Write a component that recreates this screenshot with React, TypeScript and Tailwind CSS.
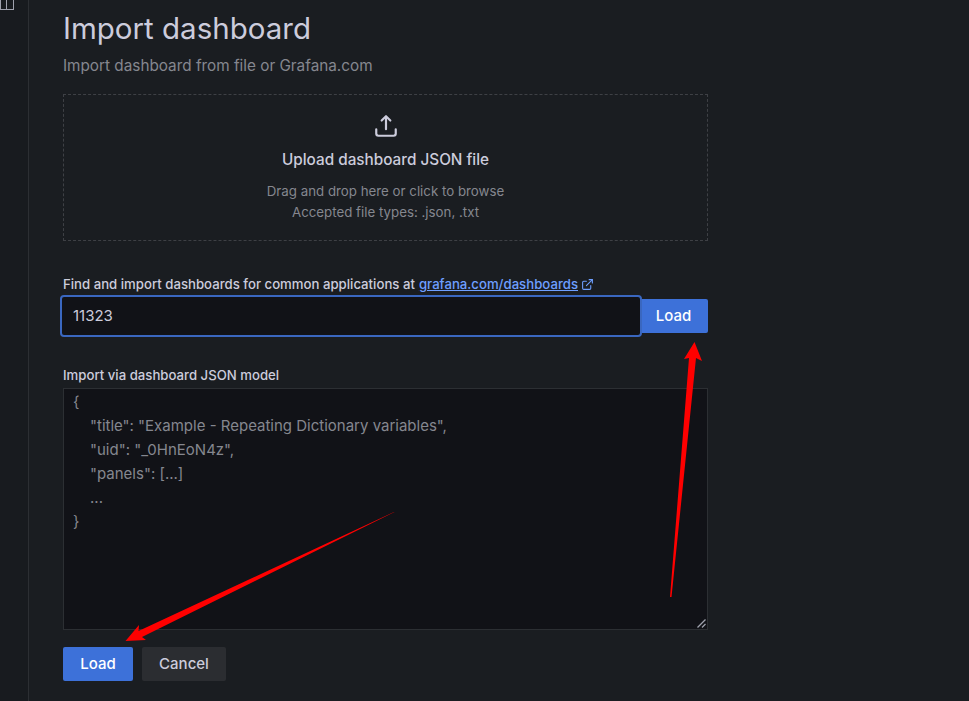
const font = "font-['Inter','Noto_Sans',sans-serif]";

function UploadIcon() {
  return (
    <svg width="26" height="26" viewBox="0 0 24 24" fill="#ccccdc">
      <path d="M8.71 7.71 11 5.41V15a1 1 0 0 0 2 0V5.41l2.29 2.3a1 1 0 0 0 1.42 0 1 1 0 0 0 0-1.42l-4-4a1 1 0 0 0-1.42 0l-4 4a1 1 0 1 0 1.42 1.42Z" />
      <path d="M21 14a1 1 0 0 0-1 1v4a1 1 0 0 1-1 1H5a1 1 0 0 1-1-1v-4a1 1 0 0 0-2 0v4a3 3 0 0 0 3 3h14a3 3 0 0 0 3-3v-4a1 1 0 0 0-1-1Z" />
    </svg>
  );
}

function ExternalIcon() {
  return (
    <svg width="13" height="13" viewBox="0 0 24 24" fill="none" stroke="#6e9fff" strokeWidth="2" strokeLinecap="round" strokeLinejoin="round">
      <path d="M18 14v5a2 2 0 0 1-2 2H5a2 2 0 0 1-2-2V8a2 2 0 0 1 2-2h5" />
      <path d="M15 3h6v6" />
      <path d="M10 14 21 3" />
    </svg>
  );
}

function Arrows() {
  return (
    <svg className="absolute left-0 top-0 pointer-events-none" width="969" height="701" viewBox="0 0 969 701">
      <polygon fill="#ff0000" points="670,597 689,358 684,359 694.5,342 702,361 696,358 671.5,597" />
      <polygon fill="#ff0000" points="394.5,512 142,637 146,640 125.5,641 139,625 138.5,631 394,512" />
    </svg>
  );
}

export default function App() {
  return (
    <div className={`relative flex h-[701px] w-[969px] overflow-hidden bg-[#1a1d21] ${font}`}>
      <div className="relative h-full w-[29px] shrink-0 border-r border-[#2c2f33] bg-[#181b1f]">
        <div className="absolute left-0 top-[-5px] flex h-[15px] w-[14px] border-[1.5px] border-[#9fa1ad]">
          <div className="w-[6px] border-r-[1.5px] border-[#9fa1ad]" />
        </div>
      </div>

      <main className="w-[679px] shrink-0 pl-[34px]">
        <h1 className="mt-[9px] h-[38px] text-[29.5px] leading-[38px] text-[#ccccdc]">Import dashboard</h1>
        <p className="mt-[9px] h-[20px] text-[15.3px] leading-[20px] text-[#85878f]">Import dashboard from file or Grafana.com</p>

        <div className="mt-[18px] flex h-[147px] flex-col items-center border border-dashed border-[#3e4045] text-center">
          <div className="mt-[18px] h-[26px]">
            <UploadIcon />
          </div>
          <div className="mt-[11px] text-[15.3px] font-medium leading-[20px] text-[#ccccdc]">Upload dashboard JSON file</div>
          <div className="mt-[11px] text-[13.3px] leading-[21px] text-[#85878f]">
            Drag and drop here or click to browse
            <br />
            Accepted file types: .json, .txt
          </div>
        </div>

        <div className="mt-[34px] flex h-[18px] items-center text-[13.2px] font-medium leading-[18px] text-[#ccccdc]">
          Find and import dashboards for common applications at
          <a className="ml-[4px] text-[#6e9fff] underline">grafana.com/dashboards</a>
          <span className="ml-[3px] flex">
            <ExternalIcon />
          </span>
        </div>

        <div className="mt-[2px] flex h-[42px] items-center">
          <div className="ml-[-3px] flex h-[42px] w-[582px] items-center rounded-[4px] border-2 border-[#3a67c0] bg-[#111217] pl-[11px] text-[15px] text-[#ccccdc]">
            11323
          </div>
          <button className="h-[34px] w-[66px] rounded-r-[2px] bg-[#3d71d9] pr-[3px] text-[15px] font-medium text-white">Load</button>
        </div>

        <div className="mt-[29px] h-[18px] text-[13.2px] font-medium leading-[18px] text-[#ccccdc]">Import via dashboard JSON model</div>

        <div className="relative mt-[4px] h-[242px] border border-[#2c2f33] bg-[#111217] pl-[9px] pt-[1px] text-[15px] leading-[24px] text-[#85878f]">
          <div>{"{"}</div>
          <div className="pl-[17px]">"title": "Example - Repeating Dictionary variables",</div>
          <div className="pl-[17px]">"uid": "_0HnEoN4z",</div>
          <div className="pl-[17px]">"panels": [...]</div>
          <div className="pl-[17px]">...</div>
          <div>{"}"}</div>
          <svg className="absolute bottom-[1px] right-[1px]" width="9" height="9" viewBox="0 0 9 9" stroke="#9fa1ad" strokeWidth="1.2">
            <path d="M0.5 8.5 8.5 0.5" />
            <path d="M5 8.5 8.5 5" />
          </svg>
        </div>

        <div className="mt-[17px] flex gap-[9px]">
          <button className="h-[34px] w-[70px] rounded-[2px] bg-[#3d71d9] text-[15px] font-medium text-white">Load</button>
          <button className="h-[34px] w-[84px] rounded-[2px] bg-[#2b2d31] text-[15px] font-medium text-[#ccccdc]">Cancel</button>
        </div>
      </main>

      <Arrows />
    </div>
  );
}
